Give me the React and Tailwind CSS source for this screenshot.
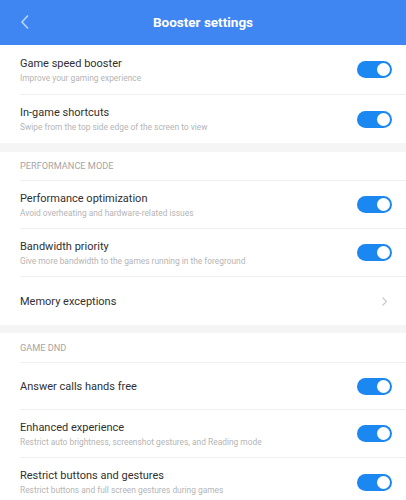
import React from 'react';

const Toggle = () => (
  <div className="flex h-[17px] w-[35px] shrink-0 items-center justify-end rounded-full bg-[#1a88f0] p-[2px]">
    <div className="h-[13px] w-[13px] rounded-full bg-white"></div>
  </div>
);

const Chevron = () => (
  <svg width="7" height="11" viewBox="0 0 7 11" className="shrink-0">
    <path d="M1.5 1.5 L5.5 5.5 L1.5 9.5" fill="none" stroke="#c8c8c8" strokeWidth="1.1" />
  </svg>
);

const Row = ({ title, sub, chevron, h = 'h-[48px]', last }) => (
  <div className={`ml-5 flex ${h} items-center pr-[14px] ${last ? '' : 'border-b border-[#efefef]'}`}>
    <div className="flex min-w-0 flex-1 flex-col">
      <span className="text-[11px] leading-[15px] text-[#303030]">{title}</span>
      {sub && <span className="mt-[1px] text-[8.4px] leading-[12px] text-[#b5b5b5]">{sub}</span>}
    </div>
    {chevron ? <div className="pr-[4px]"><Chevron /></div> : <Toggle />}
  </div>
);

const Section = ({ label, h }) => (
  <div className={`ml-5 flex ${h} items-center border-b border-[#efefef]`}>
    <span className="text-[9.2px] text-[#a5a5a5]">{label}</span>
  </div>
);

const Band = ({ h }) => <div className={`${h} bg-[#f5f5f5]`}></div>;

export default function App() {
  return (
    <div className="h-[500px] w-[406px] overflow-hidden bg-white" style={{ fontFamily: 'Roboto, "Noto Sans", sans-serif' }}>
      {/* Header */}
      <div className="relative flex h-[45px] items-center justify-center bg-[#3f86f2]">
        <svg width="10" height="16" viewBox="0 0 10 16" className="absolute left-[20px] top-[14px]">
          <path d="M8 1.5 L2 8 L8 14.5" fill="none" stroke="#b9d4ff" strokeWidth="1.6" />
        </svg>
        <span className="text-[13.5px] font-bold text-white">Booster settings</span>
      </div>

      <Row title="Game speed booster" sub="Improve your gaming experience" h="h-[50px]" />
      <Row title="In-game shortcuts" sub="Swipe from the top side edge of the screen to view" last />
      <Band h="h-[9px]" />
      <Section label="PERFORMANCE MODE" h="h-[29px]" />
      <Row title="Performance optimization" sub="Avoid overheating and hardware-related issues" />
      <Row title="Bandwidth priority" sub="Give more bandwidth to the games running in the foreground" />
      <Row title="Memory exceptions" chevron last />
      <Band h="h-[8px]" />
      <Section label="GAME DND" h="h-[30px]" />
      <Row title="Answer calls hands free" h="h-[47px]" />
      <Row title="Enhanced experience" sub="Restrict auto brightness, screenshot gestures, and Reading mode" />
      <Row title="Restrict buttons and gestures" sub="Restrict buttons and full screen gestures during games" last />
    </div>
  );
}
